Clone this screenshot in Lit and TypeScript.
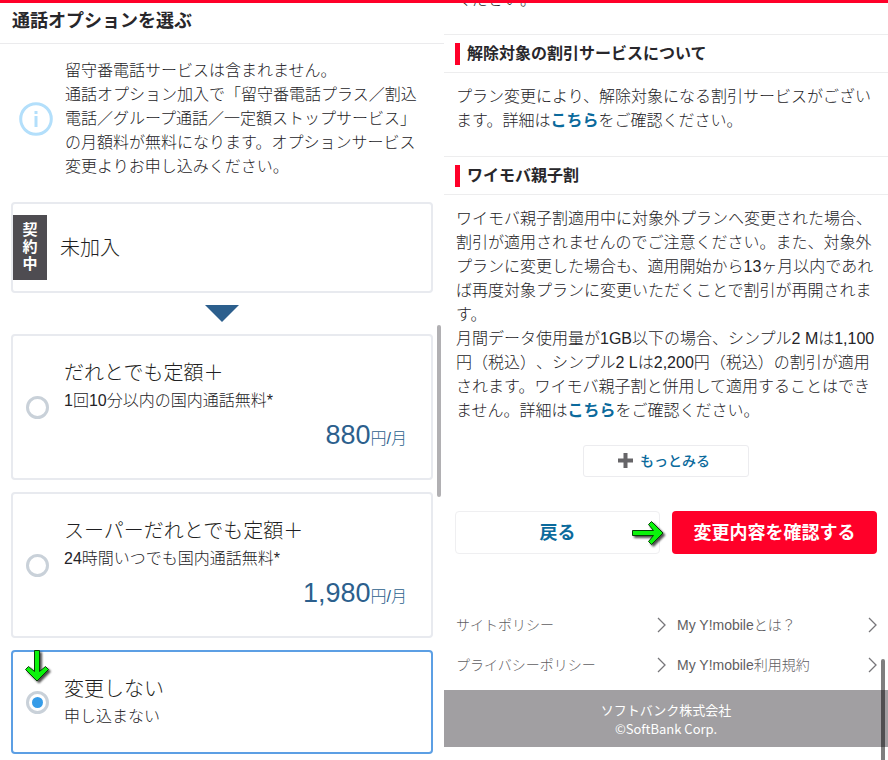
import { LitElement, html, css, svg } from "lit";
import { customElement, state } from "lit/decorators.js";

interface Plan {
  id: string;
  title: string;
  note: string;
  price?: string;
}

const PLANS: Plan[] = [
  { id: "flat", title: "だれとでも定額＋", note: "1回10分以内の国内通話無料*", price: "880" },
  { id: "super", title: "スーパーだれとでも定額＋", note: "24時間いつでも国内通話無料*", price: "1,980" },
  { id: "none", title: "変更しない", note: "申し込まない" },
];

const FOOTER_LINKS = ["サイトポリシー", "My Y!mobileとは？", "プライバシーポリシー", "My Y!mobile利用規約"];

const ARROW = "M9.5 .5H14.5V21.5L20.5 16.5L23.5 19.5L12 31L.5 19.5L3.5 16.5L9.5 21.5Z";
const downArrow = svg`<path d=${ARROW} fill="#0bf40b" stroke="#063d06" stroke-width="1"/>`;

@customElement("option-picker")
export class OptionPicker extends LitElement {
  @state() private selected = "none";

  static styles = css`
    :host { display: block; position: relative; }
    h1, p { margin: 0; }
    .title {
      height: 41px; padding: 0 12px; border-bottom: 1px solid #ebebed;
      font-size: 18px; line-height: 36px; font-weight: 700; color: #28272b;
      box-sizing: border-box;
    }
    .notice { display: flex; align-items: center; gap: 12px; padding: 15px 20px 23px 19px; }
    .info { flex: none; width: 34px; height: 34px; }
    .notice p { flex: 1; }
    .list { padding: 0 11px; display: flex; flex-direction: column; gap: 12px; }
    .card {
      border: 2px solid #e8eaef; border-radius: 4px; box-sizing: border-box;
      display: flex; align-items: center;
    }
    .current { height: 91px; gap: 13px; font-size: 20px; color: #1f1f22; }
    .badge {
      background: #4e4c51; color: #fff; box-sizing: border-box;
      width: 34px; height: 65px; padding: 6px 9px; font-size: 15px; line-height: 17px;
      font-weight: 700; text-align: center;
    }
    .down { display: block; width: 34px; height: 17px; margin: 0 auto; fill: #2c5f8d; }
    .option { position: relative; gap: 15px; padding: 23px 24px 23px 13px; cursor: pointer; }
    .option.on { border-color: #5c9fe4; }
    .radio {
      appearance: none; flex: none; margin: 0; width: 23px; height: 23px;
      border: 3px solid #c9d1d9; border-radius: 50%; display: grid; place-items: center;
      box-sizing: border-box; background: #fff;
    }
    .radio:checked::before {
      content: ""; width: 11px; height: 11px; border-radius: 50%; background: #369ce8;
    }
    .body { flex: 1; display: flex; flex-direction: column; }
    .name { font-size: 20px; line-height: 28px; color: #1f1f22; }
    .note { margin-top: 2px; line-height: 24px; }
    .price {
      margin: 8px 0 2px; line-height: 28px; text-align: right; color: #2c5f8d;
    }
    .amount { font-size: 27px; }
    .pointer {
      position: absolute; left: 12px; top: -2px; width: 28px; height: 36px;
      filter: drop-shadow(2px 2px 1px #000000b0);
    }
    .thumb {
      position: absolute; right: 3px; top: 322px; width: 4px; height: 172px;
      border-radius: 2px; background: #b1b0b3;
    }
  `;

  render() {
    return html`
      <h1 class="title">通話オプションを選ぶ</h1>
      <div class="notice">
        <svg class="info" viewBox="0 0 34 34" aria-hidden="true">
          <circle cx="17" cy="17" r="15.3" fill="none" stroke="#b3dffb" stroke-width="3" />
          <path d="M15.5 9h3v3h-3zM15.5 14h3v11h-3z" fill="#b3dffb" />
        </svg>
        <p>
          留守番電話サービスは含まれません。<br />通話オプション加入で「留守番電話プラス／割込電話／グループ通話／一定額ストップサービス」の月額料が無料になります。オプションサービス変更よりお申し込みください。
        </p>
      </div>
      <div class="list">
        <div class="card current"><span class="badge">契約中</span><span>未加入</span></div>
        <svg class="down" viewBox="0 0 34 17" aria-hidden="true"><path d="M0 0H34L17 17Z" /></svg>
        ${PLANS.map(
          (p) => html`
            <label class="card option ${this.selected === p.id ? "on" : ""}">
              <input class="radio" type="radio" name="plan" .checked=${this.selected === p.id}
                @change=${() => (this.selected = p.id)} />
              <span class="body">
                <span class="name">${p.title}</span>
                <span class="note">${p.note}</span>
                ${p.price
                  ? html`<span class="price"><span class="amount">${p.price}</span>円/月</span>`
                  : ""}
              </span>
              ${p.id === "none"
                ? html`<svg class="pointer" viewBox="0 0 28 36" aria-hidden="true">${downArrow}</svg>`
                : ""}
            </label>
          `,
        )}
      </div>
      <div class="thumb"></div>
    `;
  }
}

@customElement("confirm-panel")
export class ConfirmPanel extends LitElement {
  static styles = css`
    :host { display: block; position: relative; overflow: hidden; }
    h2, p { margin: 0; }
    a { text-decoration: none; }
    button { font-family: inherit; font-weight: 700; cursor: pointer; box-sizing: border-box; }
    .text { padding: 0 12px; }
    .tail { margin-top: -15px; margin-bottom: 22px; }
    .head {
      display: flex; align-items: center; gap: 7px; height: 39px; padding: 0 11px;
      border: solid #ededee; border-width: 1px 0; box-sizing: border-box;
      font-size: 16px; font-weight: 700; color: #28272b;
    }
    .head::before { content: ""; width: 5px; height: 22px; background: #ff0029; }
    .discount { padding-top: 12px; padding-bottom: 23px; }
    .family { padding-top: 12px; }
    .link { color: #0b6a9c; font-weight: 700; }
    .more {
      display: flex; align-items: center; justify-content: center; gap: 7px;
      width: 166px; height: 32px; margin: 22px auto 34px; padding: 0 4px 2px 0;
      border: 1px solid #ececef; border-radius: 3px; background: #fff;
      color: #0b6a9c; font-size: 14px; font-weight: 500;
    }
    .plus { width: 15px; height: 15px; fill: #666568; }
    .actions { display: grid; grid-template-columns: 1fr 1fr; gap: 12px; padding: 0 11px; }
    .back, .confirm { height: 43px; padding: 0 0 3px; border-radius: 4px; font-size: 18px; }
    .back { position: relative; border: 1px solid #efeff1; background: #fff; color: #0b6a9c; }
    .confirm { border: 0; background: #ff0029; color: #fff; }
    .pointer {
      position: absolute; right: -8px; top: 8px; width: 36px; height: 28px;
      filter: drop-shadow(2px 2px 1px #000000b0);
    }
    .links {
      display: grid; grid-template-columns: 21fr 20fr; column-gap: 11px;
      padding: 51px 11px 5px 12px;
    }
    .nav {
      display: flex; align-items: center; justify-content: space-between;
      height: 40px; font-size: 14px; color: #5f5e62;
    }
    .chev { width: 9px; height: 16px; fill: none; stroke: #77767a; stroke-width: 1.3; }
    .company {
      padding: 10px 0 9px; background: #a19fa2; color: #fff; text-align: center;
      font-family: "Noto Sans CJK JP", sans-serif; font-size: 13px; line-height: 19px;
      font-weight: 400;
    }
    .thumb {
      position: absolute; right: 3px; bottom: 0; width: 4px; height: 101px;
      border-radius: 2px 2px 0 0; background: #00000080;
    }
  `;

  render() {
    return html`
      <p class="text tail">ください。</p>
      <h2 class="head">解除対象の割引サービスについて</h2>
      <p class="text discount">
        プラン変更により、解除対象になる割引サービスがございます。詳細は<a class="link" href="#discount">こちら</a>をご確認ください。
      </p>
      <h2 class="head">ワイモバ親子割</h2>
      <p class="text family">
        ワイモバ親子割適用中に対象外プランへ変更された場合、割引が適用されませんのでご注意ください。また、対象外プランに変更した場合も、適用開始から13ヶ月以内であれば再度対象プランに変更いただくことで割引が再開されます。<br />月間データ使用量が1GB以下の場合、シンプル2 Mは1,100円（税込）、シンプル2 Lは2,200円（税込）の割引が適用されます。ワイモバ親子割と併用して適用することはできません。詳細は<a class="link" href="#family">こちら</a>をご確認ください。
      </p>
      <button class="more" type="button">
        <svg class="plus" viewBox="0 0 15 15" aria-hidden="true"><path d="M5.5 0h4v5.5H15v4H9.5V15h-4V9.5H0v-4h5.5z" /></svg>
        もっとみる
      </button>
      <div class="actions">
        <button class="back" type="button">
          戻る
          <svg class="pointer" viewBox="0 0 36 28" aria-hidden="true">
            <g transform="translate(1 25) rotate(-90)">${downArrow}</g>
          </svg>
        </button>
        <button class="confirm" type="button">変更内容を確認する</button>
      </div>
      <nav class="links">
        ${FOOTER_LINKS.map(
          (t) => html`<a class="nav" href="#">${t}<svg class="chev" viewBox="0 0 9 16" aria-hidden="true"><path d="M1 1L8 8L1 15" /></svg></a>`,
        )}
      </nav>
      <div class="company">ソフトバンク株式会社<br />©SoftBank Corp.</div>
      <div class="thumb"></div>
    `;
  }
}

@customElement("app-root")
export class AppRoot extends LitElement {
  static styles = css`
    :host {
      display: block; min-height: 100vh; box-sizing: border-box;
      border-top: 3px solid #ff0029; background: #fff; color: #242327;
      font-family: "Liberation Sans", "Noto Sans CJK JP", sans-serif;
      font-size: 16px; line-height: 24px; font-weight: 300;
      text-spacing-trim: space-all;
    }
    .columns { display: grid; grid-template-columns: 1fr 1fr; min-height: calc(100vh - 3px); }
  `;

  render() {
    return html`
      <main class="columns" lang="ja">
        <option-picker></option-picker>
        <confirm-panel></confirm-panel>
      </main>
    `;
  }
}
